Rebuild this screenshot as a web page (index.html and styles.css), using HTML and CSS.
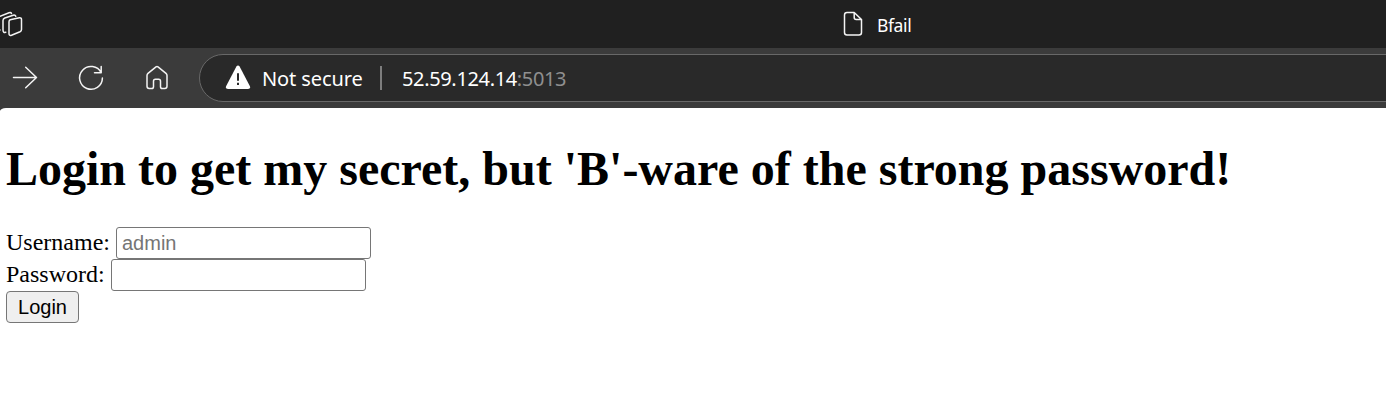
FILE: index.html
```html
<!DOCTYPE html>
<html lang="en">
<head>
<meta charset="utf-8">
<title>Bfail</title>
<link rel="stylesheet" href="styles.css">
</head>
<body>
<header class="tabs">
  <svg class="workspaces" width="24" height="48" viewBox="0 0 24 48">
    <path d="M10.2 19.8L19.4 17.8Q21.5 17.6 21.5 19.6V29.5Q21.5 31 20 31.7L11.5 35.2Q9 36 9 33.5V22Q9 20.3 10.2 19.8Z"/>
    <path d="M5.8 32.3Q3 33 3 30V20.5Q3 18.7 4.8 18L13.2 15.2Q15.3 14.8 15.8 16.2"/>
    <path d="M0 30H-1M0 16.2L9 12.8Q11 12.2 11.5 13.5"/>
  </svg>
  <div class="tab">
    <svg width="20" height="26" viewBox="0 0 20 26">
      <path d="M4 1.5H11.2L18.5 8.5V21.5Q18.5 24 16 24H4Q1.5 24 1.5 21.5V4Q1.5 1.5 4 1.5ZM11.2 1.5V6.5Q11.2 8.5 13.2 8.5H18.5"/>
    </svg>
    <span class="tab-title">Bfail</span>
  </div>
</header>
<nav class="toolbar">
  <svg class="nav-icons" width="180" height="60" viewBox="0 0 180 60">
    <path d="M13.5 29.5H36.5M25.7 19.3L36.5 29.5L25.7 39.7"/>
    <path d="M101.2 24.8A11.4 11.4 0 1 0 102.4 30M101.2 18.5V24.8H94.5"/>
    <path d="M156 18.8Q157 18 158 18.8L166 25.4Q167 26.2 167 27.5V38.3Q167 40.5 164.8 40.5H162.3Q160.5 40.5 160.5 38.7V33.2Q160.5 31.3 158.6 31.3H155.4Q153.5 31.3 153.5 33.2V38.7Q153.5 40.5 151.7 40.5H149.2Q147 40.5 147 38.3V27.5Q147 26.2 148 25.4Z"/>
  </svg>
  <div class="address">
    <svg width="26" height="26" viewBox="0 0 26 26">
      <path class="warn" d="M11.4 1.6Q13 -.6 14.6 1.6L24.8 21.1Q26 23.9 23 23.9H3Q0 23.9 1.2 21.1Z"/>
      <path class="bang" d="M13 8.2V15.8M13 17.8V20"/>
    </svg>
    <span class="security">Not secure</span>
    <span class="divider"></span>
    <span class="url">52.59.124.14<span class="port">:5013</span></span>
  </div>
</nav>
<main class="page">
  <h1 class="heading">Login to get my secret, but 'B'-ware of the strong password!</h1>
  <form class="login">
    <div class="field"><label for="user">Username:</label><input id="user" type="text" placeholder="admin"></div>
    <div class="field"><label for="pass">Password:</label><input id="pass" type="password"></div>
    <button class="submit" type="button">Login</button>
  </form>
</main>
</body>
</html>
```
FILE: styles.css
```css
* { box-sizing: border-box; }
body {
  margin: 0;
  height: 401px;
  overflow: hidden;
  background: #3b3b3b;
  font-family: "Noto Sans", sans-serif;
}
svg { flex: none; fill: none; stroke: #f4f4f4; stroke-width: 1.5; stroke-linecap: round; stroke-linejoin: round; }
.tabs { display: flex; height: 48px; background: #202020; }
.tab { display: flex; align-items: center; margin-left: 819px; color: #fff; }
.tab svg { margin-top: -1px; }
.tab-title { margin: 2px 0 0 14px; font-size: 17.5px; line-height: 24px; letter-spacing: -0.4px; }
.toolbar { display: flex; height: 60px; background: #3b3b3b; }
.address {
  display: flex;
  align-items: center;
  flex: 1;
  height: 48px;
  margin: 6px -40px 0 19px;
  padding-left: 25px;
  border: 1.5px solid #686868;
  border-radius: 24px;
  background: #292929;
  color: #fff;
  font-size: 20px;
  white-space: nowrap;
}
.address .warn { fill: #fff; stroke: none; }
.address .bang { stroke: #292929; stroke-width: 2; stroke-linecap: butt; }
.security { width: 101px; margin-left: 11px; letter-spacing: -0.1px; }
.divider { width: 2px; height: 24px; margin: 0 20px 0 17px; background: #7d7d7d; }
.url { letter-spacing: -0.35px; }
.port { color: #8f8f8f; }
.page {
  height: 293px;
  padding: 33px 6px 0;
  border-top-left-radius: 6px 3px;
  background: #fff;
  color: #000;
  font: 24px/32px "Liberation Serif", serif;
}
.heading { margin: 0 0 31px; font-size: 48px; line-height: 55px; white-space: nowrap; }
.field { display: flex; height: 32px; gap: 6px; }
.field label { line-height: 30px; }
.field input {
  width: 255px;
  height: 32px;
  padding: 0 5px;
  border: 1px solid #767676;
  border-radius: 3px;
  background: #fff;
  font: 20px "Liberation Sans", sans-serif;
}
.field input::placeholder { color: #757575; }
.submit {
  display: block;
  width: 73px;
  height: 32px;
  padding: 0;
  border: 1px solid #767676;
  border-radius: 4px;
  background: #efefef;
  color: #000;
  font: 20px "Liberation Sans", sans-serif;
}
```
